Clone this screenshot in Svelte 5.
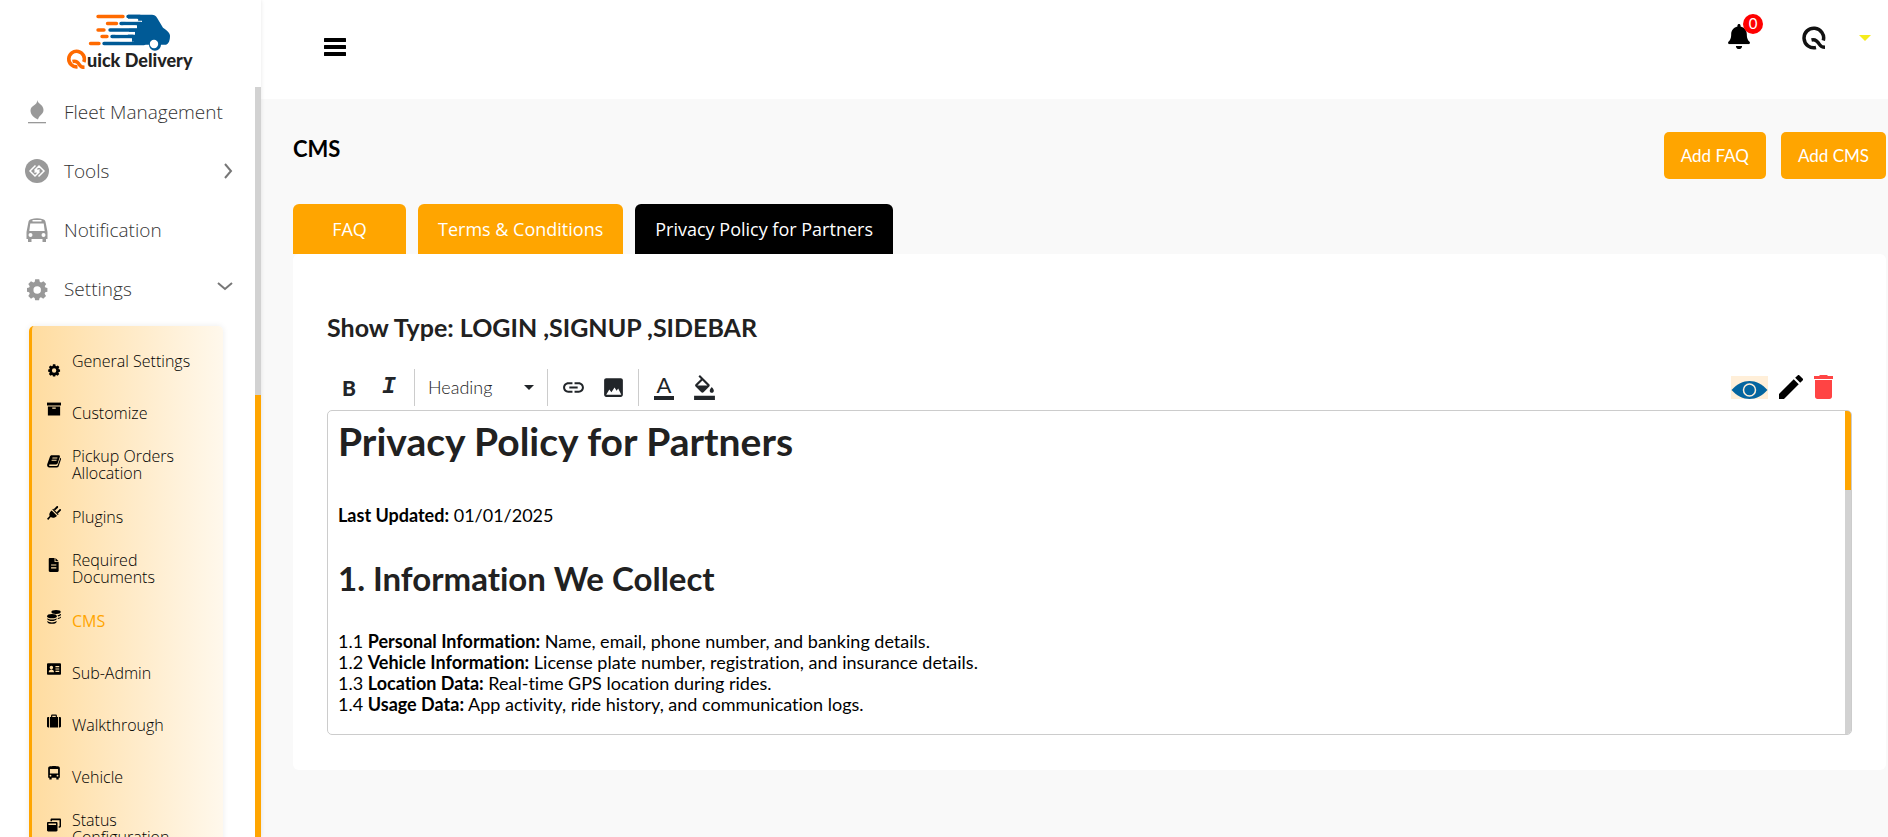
<script lang="ts">
	type MenuItem = { name: string; icon: string; arrow?: 'right' | 'down' };
	type SubItem = { name: string; icon: string; low?: boolean };

	const menu: MenuItem[] = [
		{ name: 'Fleet Management', icon: 'flame' },
		{ name: 'Tools', icon: 'tools', arrow: 'right' },
		{ name: 'Notification', icon: 'coach' },
		{ name: 'Settings', icon: 'gear', arrow: 'down' }
	];

	const subMenu: SubItem[] = [
		{ name: 'General Settings', icon: 'gear', low: true },
		{ name: 'Customize', icon: 'archive' },
		{ name: 'Pickup Orders Allocation', icon: 'book' },
		{ name: 'Plugins', icon: 'plug' },
		{ name: 'Required Documents', icon: 'file' },
		{ name: 'CMS', icon: 'coins' },
		{ name: 'Sub-Admin', icon: 'card' },
		{ name: 'Walkthrough', icon: 'suitcase' },
		{ name: 'Vehicle', icon: 'bus' },
		{ name: 'Status Configuration', icon: 'windows' }
	];

	const tabs = ['FAQ', 'Terms & Conditions', 'Privacy Policy for Partners'];

	const clauses = [
		{ no: '1.1', title: 'Personal Information:', text: 'Name, email, phone number, and banking details.' },
		{ no: '1.2', title: 'Vehicle Information:', text: 'License plate number, registration, and insurance details.' },
		{ no: '1.3', title: 'Location Data:', text: 'Real-time GPS location during rides.' },
		{ no: '1.4', title: 'Usage Data:', text: 'App activity, ride history, and communication logs.' }
	];

	let activeTab = $state('Privacy Policy for Partners');
	let activeSub = $state('CMS');
	let format = $state('Heading');
</script>

{#snippet icon(name: string)}
	<svg class="icon" viewBox="0 0 24 24" fill="currentColor" aria-hidden="true">
		{#if name === 'flame'}
			<path d="M12 0c1 4 6.500 4.500 6.500 10 0 4.500-4.500 5-5.500 9.500-4-2-7.500-4.500-7.500-9 0-5.500 7.500-5 6.500-10.500z" />
			<rect x="3" y="22" width="18" height="1.3" />
		{:else if name === 'tools'}
			<circle cx="12" cy="12" r="12" />
			<g fill="none" stroke="#fff" stroke-width="1.500">
				<path d="M10.500 6.500L5 12l5 5 4-4-2-2-2.500 2.500M13.500 17.500L19 12l-5-5-4 4 2 2 2.500-2.500" />
			</g>
		{:else if name === 'coach'}
			<path fill-rule="evenodd" d="M6 1.200C10-.2 14-.2 18 1.200c1.800.7 2.500 1.600 2.700 3.500L22.500 14v7H21v3h-3.500v-3h-11v3H3v-3H1.500v-7L3.300 4.700C3.500 2.800 4.200 1.900 6 1.200zM7.500 2v1.600h9V2zM5.300 5.500L4.300 13h15.400l-1-7.500zM5.500 15a2 2 0 100 4 2 2 0 000-4zm13 0a2 2 0 100 4 2 2 0 000-4z" />
		{:else if name === 'gear'}
			<g transform="translate(2 1.500) scale(.85)">
				<path fill-rule="evenodd" d="M9.600 1h4.800l.7 3.100 1.600.7 2.700-1.700 3.200 3.300-1.700 2.700.7 1.600 2.400.5v4.500l-2.600.6-.7 1.600 1.700 2.700-3.300 3.300-2.700-1.700-1.600.7-.6 2.600H9.600L9 22.900l-1.600-.7-2.700 1.700-3.200-3.300 1.700-2.700-.7-1.600L0 15.700v-4.500l2.500-.5.7-1.600-1.700-2.700 3.200-3.300 2.700 1.700L9 4.100zM12 9a4.400 4.400 0 100 8.800A4.400 4.400 0 0012 9z" />
			</g>
		{:else if name === 'archive'}
			<path d="M0 1h24v5H0z" />
			<path fill-rule="evenodd" d="M1.500 7.500h21V23h-21zM9 9.500v2h6v-2z" />
		{:else if name === 'book'}
			<path fill-rule="evenodd" d="M8 2h12c1.700 0 2.500 1.200 2 3l-3.700 11c-.5 1.500-1.500 2-3 2H4.500c-1.300 0-1.500 2.500.5 2.500h11.500c1 0 1.500-.5 2-1.500L23 6.500c1 .5 1.200 1.500 1 2.500l-4 12c-.5 1.500-1.500 2-3 2H4c-3 0-4.500-3-3.500-6L5 4.500C5.500 3 6.500 2 8 2zm1.500 4L9 7.500h8.500L18 6zM8.200 10l-.5 1.500h8.500l.5-1.500z" />
		{:else if name === 'plug'}
			<path d="M8 7.500l9 9c-2.500 3.500-7 4.500-10.500 2.500L2 24l-2-2 4.500-4.700C3 14 4.500 10 8 7.500zM9 6l1.500-1.500 9.500 9.500-1.500 1.500z" />
			<path d="M11.500 5.500L16.500.5c1.700-1 3.300.7 2.300 2.300l-5 5zM16.500 10.500l5-5c1.700-1 3.300.7 2.300 2.300l-5 5z" />
		{:else if name === 'file'}
			<path fill-rule="evenodd" d="M5 0h8v7h7v15c0 1.200-.8 2-2 2H5c-1.200 0-2-.8-2-2V2c0-1.200.8-2 2-2zm2 11v2h9v-2zm0 5v2h9v-2z" />
			<path d="M14.500 0L20 5.500h-5.500z" />
		{:else if name === 'coins'}
			<ellipse cx="15.500" cy="3.500" rx="8" ry="3.300" />
			<ellipse cx="8.500" cy="10.500" rx="8.300" ry="3.500" />
			<path d="M.5 14c3 3 13 3 16 0v2c-2 4-14 4-16 0zM.5 19c3 3 13 3 16 0v1c-1 5-15 5-16 0zM18 9c3-.4 5-1.500 6-2.500v2c-1 1.500-3 2.300-5 2.700zM18.500 13.500c2.500-.4 4.500-1.300 5.500-2.500v2c-1 1.500-3 2.300-5.500 2.700z" />
		{:else if name === 'card'}
			<path fill-rule="evenodd" d="M2 2h20c1.200 0 2 .8 2 2v16c0 1.200-.8 2-2 2H2c-1.200 0-2-.8-2-2V4c0-1.200.8-2 2-2zm5.500 4.500a3 3 0 100 6 3 3 0 000-6zM3 17.500h9c0-3-2-4.500-4.500-4.500S3 14.500 3 17.500zM14.500 7v2H21V7zm0 4v2H21v-2zm0 4v2H21v-2z" />
		{:else if name === 'suitcase'}
			<path d="M0 7c0-1.300 1-2 2-2h1.500v18H2c-1.200 0-2-.8-2-2zM20.500 5H22c1.200 0 2 .8 2 2v14c0 1.200-.8 2-2 2h-1.500z" />
			<path fill-rule="evenodd" d="M5 5h2V3c0-1.200 1-2 2-2h6c1 0 2 .8 2 2v2h2v18H5zm4-2v2h6V3z" />
		{:else if name === 'bus'}
			<path fill-rule="evenodd" d="M4 1C8-.3 16-.3 20 1c1.500.6 2 1.500 2 3v16h-2v3h-4v-3H8v3H4v-3H2V4c0-1.500.5-2.400 2-3zm1 4v8h14V5zm1 10a1.500 1.500 0 100 3 1.500 1.500 0 000-3zm12 0a1.500 1.500 0 100 3 1.500 1.500 0 000-3z" />
		{:else if name === 'windows'}
			<path d="M8 1h14c1.200 0 2 .8 2 2v11c0 1.500-1 2.500-2.500 2.500H20V14h1.500V4H8.500v1.500H6V3c0-1.200.8-2 2-2z" />
			<path fill-rule="evenodd" d="M2 7h14c1.200 0 2 .8 2 2v12c0 1.200-.8 2-2 2H2c-1.200 0-2-.8-2-2V9c0-1.200.8-2 2-2zm.5 2.500V12h13V9.500z" />
		{/if}
	</svg>
{/snippet}

<div class="app">
	<aside class="sidebar">
		<a class="logo" href="/" aria-label="Quick Delivery">
			<svg viewBox="0 0 140 64" width="140" height="64">
				<g stroke="#ff6a00" stroke-width="3.4" stroke-linecap="round">
					<path d="M38 6.500h25M47.500 13.500h9M38 20h6M42 26.500h5M30.500 33.500h8.500" />
				</g>
				<g fill="none" stroke="#005a96" stroke-width="3.400" stroke-linecap="round">
					<path d="M68 6.500h12M61 13.500h20M50 20h27M52 26.500h21M44 33.500h40" />
				</g>
				<path fill="#005a96" d="M68 4.800h24c2 0 4 1.200 5 3l6 10c4 3 7 5 7 8 0 4-1 8-4 9h-5a6 6 0 01-12 0H74v-3h-2v-4h-4v-3h7v-3h-6v-3h8v-4h5v-4H68z" />
				<g stroke="#fff" stroke-width="2.600" stroke-linecap="round">
					<path d="M66 10h11M64 16.700h11M56 23.300h11M60 30h10" />
				</g>
				<circle cx="94" cy="34" r="4.200" fill="#fff" />
				<path fill="none" stroke="#ff6a00" stroke-width="3.600" d="M17.500 56.800A7.800 7.800 0 1123.800 52" />
				<path fill="none" stroke="#ff6a00" stroke-width="3.400" d="M12.500 51.500c4-1 5.500 1 7.500 4 1 1.500 2 1.800 4.500 1.800" />
				<text class="logo-text" x="27" y="57">uick Delivery</text>
			</svg>
		</a>
		<div class="side-scroll">
			<nav class="menu">
				<ul class="top-list">
					{#each menu as item}
						<li>
							<a class="top-link" href="#{item.icon}">
								{@render icon(item.icon)}
								<span>{item.name}</span>
								{#if item.arrow}
									<svg class="arrow" viewBox="0 0 16 16" aria-hidden="true">
										<path d={item.arrow === 'down' ? 'M1 2l7 6 7-6' : 'M8 1l6 7-6 7'} />
									</svg>
								{/if}
							</a>
						</li>
					{/each}
				</ul>
				<ul class="sub-list">
					{#each subMenu as item}
						<li>
							<a
								class="sub-link"
								class:active={activeSub === item.name}
								href="#{item.icon}"
								onclick={() => (activeSub = item.name)}
							>
								<span class="sub-icon" class:low={item.low}>{@render icon(item.icon)}</span>
								<span class="sub-name">{item.name}</span>
							</a>
						</li>
					{/each}
				</ul>
			</nav>
			<div class="side-bar"><div class="side-thumb"></div></div>
		</div>
	</aside>

	<div class="page">
		<header class="topbar">
			<button class="plain" aria-label="Toggle menu">
				<svg width="22" height="18" viewBox="0 0 22 18">
					<path d="M1 2h20M1 9h20M1 16h20" stroke="#000" stroke-width="4" stroke-linecap="round" />
				</svg>
			</button>
			<div class="account">
				<button class="plain bell" aria-label="Notifications">
					<svg width="22" height="25" viewBox="0 0 448 512">
						<path d="M224 512c35.320 0 63.970-28.650 63.970-64H160.030c0 35.350 28.650 64 63.970 64zm215.390-149.710c-19.320-20.760-55.470-51.990-55.470-154.290 0-77.700-54.480-139.900-127.940-155.160V32c0-17.670-14.320-32-31.980-32s-31.980 14.330-31.980 32v20.840C118.560 68.100 64.080 130.300 64.080 208c0 102.300-36.150 133.530-55.470 154.290-6 6.450-8.660 14.160-8.610 21.710.11 16.400 12.980 32 32.100 32h383.800c19.120 0 32-15.600 32.100-32 .05-7.550-2.610-15.270-8.610-21.710z" />
						<path d="M10 428h428" stroke="#fff" stroke-width="24" />
					</svg>
					<span class="badge">0</span>
				</button>
				<button class="plain profile" aria-label="Account">
					<svg width="24" height="24" viewBox="0 0 24 24" fill="none" stroke="#111" stroke-width="3.500">
						<path d="M14 21.500A9.800 9.800 0 1121.300 14.500" />
						<path d="M9.500 14c4-1 6 1 8 4.500 1 1.700 2.500 2.800 5.500 2.800" />
					</svg>
					<svg width="12" height="6" viewBox="0 0 12 6"><path d="M0 0h12L6 6z" fill="#f5ec1b" /></svg>
				</button>
			</div>
		</header>

		<main>
			<div class="title-row">
				<h1>CMS</h1>
				<div class="actions">
					<button class="add">Add FAQ</button>
					<button class="add">Add CMS</button>
				</div>
			</div>

			<div class="tabs" role="tablist">
				{#each tabs as tab}
					<button
						class="tab"
						class:active={activeTab === tab}
						role="tab"
						aria-selected={activeTab === tab}
						onclick={() => (activeTab = tab)}>{tab}</button
					>
				{/each}
			</div>

			<section class="card">
				<h2 class="show-type">Show Type: LOGIN ,SIGNUP ,SIDEBAR</h2>

				<div class="toolbar">
					<div class="group">
						<button class="tool bold" aria-label="Bold">B</button>
						<button class="tool italic" aria-label="Italic">I</button>
					</div>
					<div class="group">
						<div class="format">
							<select aria-label="Text format" bind:value={format}>
								<option>Heading</option>
								<option>Paragraph</option>
							</select>
							<svg width="10" height="5" viewBox="0 0 10 5"><path d="M0 0h10L5 5z" fill="#212529" /></svg>
						</div>
					</div>
					<div class="group">
						<button class="tool" aria-label="Insert link">
							<svg width="25" height="25" viewBox="0 0 24 24">
								<path d="M3.900 12c0-1.710 1.390-3.100 3.100-3.100h4V7H7c-2.760 0-5 2.240-5 5s2.240 5 5 5h4v-1.900H7c-1.710 0-3.100-1.390-3.100-3.100zM8 13h8v-2H8v2zm9-6h-4v1.900h4c1.710 0 3.100 1.390 3.100 3.100s-1.390 3.100-3.100 3.100h-4V17h4c2.760 0 5-2.240 5-5s-2.240-5-5-5z" />
							</svg>
						</button>
						<button class="tool" aria-label="Insert image">
							<svg width="25" height="25" viewBox="0 0 24 24">
								<path d="M21 19V5c0-1.100-.9-2-2-2H5c-1.100 0-2 .9-2 2v14c0 1.100.9 2 2 2h14c1.100 0 2-.9 2-2zM5 19l3-5 2 2.500 3-4.500 2 3 1.500-2L19.500 19z" />
							</svg>
						</button>
					</div>
					<div class="group">
						<button class="tool color" aria-label="Text color">A</button>
						<button class="tool" aria-label="Background color">
							<svg width="25" height="25" viewBox="0 0 24 24">
								<path d="M16.560 8.940L7.620 0 6.210 1.410l2.380 2.380-5.150 5.150c-.59.590-.59 1.540 0 2.120l5.500 5.500c.29.290.68.440 1.060.44s.77-.15 1.060-.44l5.500-5.500c.59-.58.59-1.530 0-2.120zM5.210 10L10 5.210 14.790 10H5.210zM19 11.500s-2 2.170-2 3.500c0 1.100.9 2 2 2s2-.9 2-2c0-1.330-2-3.500-2-3.500zM2 20h20v4H2v-4z" />
							</svg>
						</button>
					</div>
					<div class="row-actions">
						<button class="plain" aria-label="View">
							<svg width="37" height="23" viewBox="0 0 37 23">
								<path fill="#ffefd9" d="M0 0h37v23H0z" />
								<path fill="#0465a0" d="M.5 14C6 8 12 5 18.500 5S31 8 36.500 14C31 20 25 23 18.500 23S6 20 .5 14z" />
								<circle cx="18.500" cy="14" r="6" fill="#0465a0" stroke="#ffefd9" stroke-width="1.500" />
							</svg>
						</button>
						<button class="plain" aria-label="Edit">
							<svg width="24" height="24" viewBox="3 3 18 18">
								<path d="M3 17.250V21h3.750L17.810 9.940l-3.750-3.750L3 17.250zM20.710 7.040a1 1 0 000-1.410l-2.340-2.340a1 1 0 00-1.410 0l-1.830 1.830 3.750 3.750 1.830-1.830z" />
							</svg>
						</button>
						<button class="plain" aria-label="Delete">
							<svg width="19" height="24" viewBox="0 0 19 24" fill="#ff4444">
								<path d="M5 1l1-1h7l1 1h5v3H0V1zM1 5h17v16.500c0 1.500-1 2.500-2.500 2.500h-12C2 24 1 23 1 21.500z" />
							</svg>
						</button>
					</div>
				</div>

				<div class="editor">
					<article>
						<h1>Privacy Policy for Partners</h1>
						<p><strong>Last Updated:</strong> 01/01/2025</p>
						<h2>1. Information We Collect</h2>
						<p>
							{#each clauses as clause}
								<span class="clause">{clause.no} <strong>{clause.title}</strong> {clause.text}</span>
							{/each}
						</p>
					</article>
					<div class="editor-bar"><div class="editor-thumb"></div></div>
				</div>
			</section>
		</main>
	</div>
</div>

<style>
	:global(body) {
		background: #f9f9f9;
		overflow: hidden;
	}

	.app {
		display: flex;
		height: 100vh;
		font-family: Lato, "Open Sans", sans-serif;
		font-size: 17px;
		font-variant-ligatures: none;
		color: #000;
	}

	button {
		border: 0;
		font: inherit;
		cursor: pointer;
	}

	svg {
		display: block;
	}

	ul {
		list-style: none;
		margin: 0;
		padding: 0;
	}

	.plain {
		padding: 0;
		background: none;
	}

	/* sidebar */
	.sidebar {
		display: flex;
		flex-direction: column;
		width: 261px;
		flex: none;
		background: #fff;
		box-shadow: 0 0 4px rgba(0, 0, 0, 0.1);
		font-family: "Open Sans", sans-serif;
		font-weight: 300;
		z-index: 1;
	}

	.logo {
		height: 77px;
		padding: 10px 0 0 60px;
		box-sizing: border-box;
		flex: none;
		margin-bottom: 10px;
	}

	.logo-text {
		font-family: Lato, sans-serif;
		font-size: 18px;
		font-weight: 900;
		fill: #222;
	}

	.side-scroll {
		display: flex;
		flex: 1;
		min-height: 0;
	}

	.menu {
		flex: 1;
		overflow: hidden;
	}

	.side-bar {
		display: flex;
		flex-direction: column;
		justify-content: flex-end;
		width: 6px;
		background: #d2d2d2;
	}

	.side-thumb {
		height: 59%;
		background: #ffa500;
	}

	.top-link {
		display: flex;
		align-items: center;
		height: 59px;
		padding: 0 22px 10px 25px;
		box-sizing: border-box;
		color: #333;
		font-size: 19px;
		text-decoration: none;
	}

	.top-link .icon {
		width: 24px;
		height: 24px;
		margin-right: 15px;
		color: #999;
	}

	.arrow {
		width: 16px;
		height: 16px;
		margin-left: auto;
		fill: none;
		stroke: #777;
		stroke-width: 2;
	}

	.sub-list {
		margin: 3px 32px 0 29px;
		padding: 9px 0;
		border-left: 3px solid #ffa500;
		border-radius: 5px;
		background: linear-gradient(90deg, #ffdca0, #fff8ec);
		box-shadow: 0 0 6px rgba(0, 0, 0, 0.08);
	}

	.sub-link {
		display: flex;
		align-items: center;
		height: 52px;
		padding-left: 15px;
		color: #000;
		font-size: 16px;
		line-height: 17px;
		text-decoration: none;
	}

	.sub-link.active .sub-name {
		color: #ffa500;
		font-weight: 400;
	}

	.sub-icon {
		padding-bottom: 8px;
		margin-right: 11px;
		color: #000;
	}

	.sub-icon.low {
		padding: 18px 0 0;
	}

	.sub-icon .icon {
		width: 14px;
		height: 14px;
	}

	.sub-name {
		max-width: 124px;
	}

	/* top bar */
	.page {
		flex: 1;
		min-width: 0;
	}

	.topbar {
		display: flex;
		justify-content: space-between;
		height: 99px;
		padding: 0 17px 0 63px;
		box-sizing: border-box;
		background: #fff;
	}

	.topbar > .plain {
		height: 94px;
	}

	.account {
		display: flex;
		align-items: center;
		height: 76px;
		gap: 52px;
	}

	.bell {
		position: relative;
		padding-bottom: 3px;
	}

	.badge {
		position: absolute;
		top: -10px;
		right: -13px;
		width: 20px;
		height: 20px;
		border-radius: 50%;
		background: #f00;
		color: #fff;
		font-size: 15px;
		line-height: 19px;
	}

	.profile {
		display: flex;
		align-items: center;
		gap: 33px;
	}

	/* content */
	main {
		padding: 33px 2px 0 32px;
	}

	.title-row {
		display: flex;
		justify-content: space-between;
		margin-bottom: 25px;
	}

	.title-row h1 {
		margin: 0;
		font-size: 22px;
		line-height: 34px;
		font-weight: 700;
	}

	.actions {
		display: flex;
		gap: 15px;
	}

	.add {
		height: 47px;
		padding: 0 17px;
		border-radius: 5px;
		background: #ffa500;
		color: #fff;
	}

	.tabs {
		display: flex;
		gap: 12px;
	}

	.tab {
		height: 50px;
		min-width: 113px;
		padding: 0 20px;
		border-radius: 6px 6px 0 0;
		background: #ffa500;
		color: #fff;
		font-family: "Open Sans", sans-serif;
		font-size: 18px;
	}

	.tab.active {
		background: #000;
	}

	.card {
		padding: 56px 34px 35px;
		border-radius: 6px;
		background: #fff;
	}

	.show-type {
		margin: 0 0 24px;
		font-size: 25px;
		line-height: 34px;
		font-weight: 700;
		color: #212121;
	}

	.toolbar {
		display: flex;
		align-items: center;
		height: 42px;
		padding: 0 0 4px 2px;
		box-sizing: border-box;
		color: #212529;
	}

	.group {
		display: flex;
		align-items: center;
		height: 37px;
		padding: 0 5px;
		border-right: 1px solid #ccc;
	}

	.group:first-child {
		padding-left: 0;
	}

	.group:nth-child(4) {
		border-right: 0;
	}

	.tool {
		display: flex;
		align-items: center;
		justify-content: center;
		width: 40px;
		height: 32px;
		padding: 0;
		background: none;
		color: #212529;
		fill: #212529;
	}

	.bold {
		font-size: 21px;
		font-weight: 900;
	}

	.italic {
		font-family: "Liberation Mono", monospace;
		font-size: 23px;
		line-height: 20px;
		font-weight: 700;
		font-style: italic;
	}

	.color {
		font-size: 22px;
		line-height: 20px;
		padding-bottom: 4px;
	}

	.color::after {
		content: '';
		position: absolute;
		width: 20px;
		height: 4px;
		margin-top: 25px;
		background: #212529;
	}

	.format {
		display: flex;
		align-items: center;
		padding: 0 8px 0 4px;
	}

	.format select {
		width: 104px;
		margin-right: -4px;
		padding: 0 0 0 4px;
		border: 0;
		background: none;
		appearance: none;
		color: #222;
		font: 300 18px Lato, sans-serif;
	}

	.row-actions {
		display: flex;
		align-items: center;
		gap: 11px;
		margin-left: auto;
		padding-right: 19px;
	}

	.editor {
		display: flex;
		height: 325px;
		box-sizing: border-box;
		border: 1px solid #ccc;
		border-radius: 5px;
		overflow: hidden;
	}

	article {
		flex: 1;
		padding: 9px 10px;
	}

	article h1 {
		margin: 0 0 42px;
		font-size: 39px;
		line-height: 43px;
		font-weight: 700;
		color: #212121;
	}

	article h2 {
		margin: 32px 0 33px;
		font-size: 33px;
		line-height: 40px;
		font-weight: 700;
		color: #212121;
	}

	article p {
		margin: 0;
		font-size: 18px;
		line-height: 21px;
	}

	.clause {
		display: block;
	}

	.editor-bar {
		width: 6px;
		background: #d2d2d2;
	}

	.editor-thumb {
		height: 79px;
		background: #ffa500;
	}
</style>
